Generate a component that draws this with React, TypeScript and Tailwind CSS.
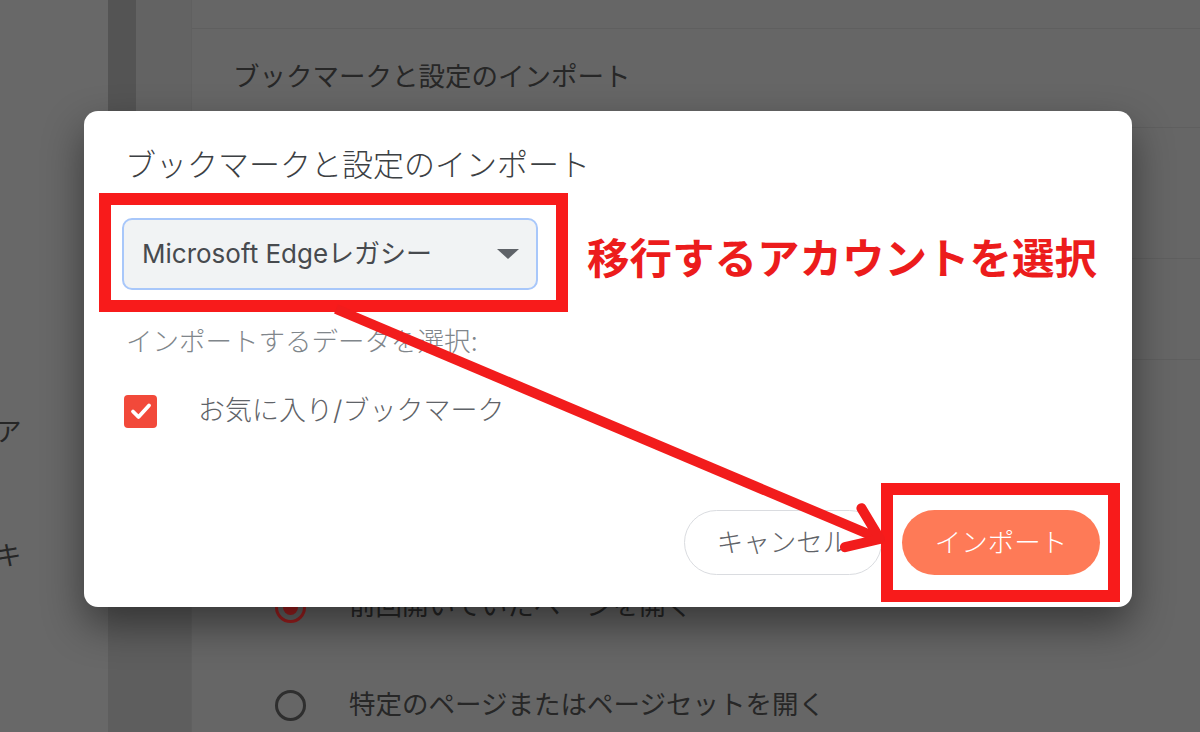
import React from "react";

const jp = "font-['Inter','Noto_Sans_CJK_JP',sans-serif]";

function Radio({ checked }: { checked?: boolean }) {
  return checked ? (
    <span className="flex h-[31px] w-[31px] items-center justify-center rounded-full border-[3px] border-[#a11f1f]">
      <span className="h-[15px] w-[15px] rounded-full bg-[#a11f1f]" />
    </span>
  ) : (
    <span className="h-[31px] w-[31px] rounded-full border-[3px] border-[#2e2e2e]" />
  );
}

function Background() {
  return (
    <div className={`flex h-[732px] w-[1200px] overflow-hidden bg-[#666666] ${jp}`}>
      {/* left nav, cut off by the window edge */}
      <div className="w-[108px] shrink-0 bg-[#686868] pt-[413px] text-[26.5px] leading-[36px] text-[#262626]">
        <div className="-ml-[5px]">ア</div>
        <div className="-ml-[5px] mt-[88px]">キ</div>
      </div>
      <div className="flex w-[84px] shrink-0 flex-col border-r border-[#606060]">
        <div className="flex h-[111px]">
          <div className="w-[28px] bg-[#545454]" />
          <div className="flex-1 bg-[#636363]" />
        </div>
        <div className="flex-1 bg-[#5e5e5e]" />
      </div>
      {/* settings list */}
      <div className="flex flex-1 flex-col text-[26.5px] leading-[36px] text-[#272727]">
        <div className="h-[29px] shrink-0 border-b border-[#5f5f5f]" />
        <div className="flex h-[99px] shrink-0 items-center border-b border-[#5f5f5f] pl-[41px] pb-[4px]">
          ブックマークと設定のインポート
        </div>
        <div className="h-[131px] shrink-0 border-b border-[#5f5f5f]" />
        <div className="h-[101px] shrink-0 border-b border-[#5f5f5f]" />
        <div className="h-[198px] shrink-0" />
        <div className="flex h-[98px] shrink-0 items-center gap-[43px] pl-[83px]">
          <Radio checked />
          <span className="-mt-[5px]">前回開いていたページを開く</span>
        </div>
        <div className="flex h-[98px] shrink-0 items-center gap-[43px] pl-[83px]">
          <Radio />
          <span className="-mt-[3px]">特定のページまたはページセットを開く</span>
        </div>
      </div>
    </div>
  );
}

function ImportDialog() {
  return (
    <div
      className={`absolute left-[84px] top-[111px] flex h-[496px] w-[1048px] flex-col rounded-[14px] bg-white pl-[38px] pr-[32px] pt-[34px] pb-[32px] shadow-[0_18px_40px_rgba(0,0,0,0.45)] ${jp}`}
    >
      <h2 className="ml-[3px] text-[31px] font-light leading-[40px] text-[#3c4043]">
        ブックマークと設定のインポート
      </h2>

      <div className="mt-[33px] flex items-center">
        <div className="relative">
          <div className="flex h-[72px] w-[416px] items-center justify-between rounded-[10px] border-2 border-[#a8c7fa] bg-[#f1f3f4] pl-[18px] pr-[17px]">
            <span className="text-[26px] leading-[34px] text-[#474a4e]">Microsoft Edgeレガシー</span>
            <svg width="22" height="10" viewBox="0 0 22 10">
              <polygon points="0,0 22,0 11,10" fill="#5f6368" />
            </svg>
          </div>
          <div className="absolute -left-[23px] -top-[25px] h-[119px] w-[469px] border-[12px] border-[#f81b1b]" />
        </div>
        <span className="ml-[49px] mt-[10px] text-[42.5px] font-bold leading-[50px] text-[#ec1c1c]">
          移行するアカウントを選択
        </span>
      </div>

      <p className="ml-[4px] mt-[33px] text-[26.5px] font-light leading-[36px] text-[#80868b]">
        インポートするデータを選択:
      </p>

      <label className="mt-[34px] flex items-center gap-[41px]">
        <span className="ml-[2px] flex h-[33px] w-[33px] items-center justify-center rounded-[4px] bg-[#f2493a]">
          <svg width="22" height="18" viewBox="0 0 22 18">
            <path d="M3 9.5 L8.5 15 L19 3.5" fill="none" stroke="white" strokeWidth="3.8" strokeLinecap="round" strokeLinejoin="round" />
          </svg>
        </span>
        <span className="text-[27px] font-light leading-[36px] text-[#5f6368]">お気に入り/ブックマーク</span>
      </label>

      <div className="mt-auto flex justify-end gap-[20px]">
        <button className="h-[65px] w-[198px] rounded-full border border-[#dadce0] bg-white text-[26.5px] font-light text-[#5f6368]">
          キャンセル
        </button>
        <div className="relative">
          <button className="h-[65px] w-[198px] rounded-full bg-[#fe7a57] text-[26.5px] font-light text-white">
            インポート
          </button>
          <div className="absolute -left-[21px] -top-[27px] h-[119px] w-[239px] border-[12px] border-[#f81b1b]" />
        </div>
      </div>
    </div>
  );
}

function Arrow() {
  // annotation arrow from the account picker down to the import button
  const x1 = 336;
  const y1 = 309;
  const x2 = 880;
  const y2 = 539;
  const ang = Math.atan2(y2 - y1, x2 - x1);
  const len = 36;
  const spread = (36 * Math.PI) / 180;
  const a = { x: x2 - len * Math.cos(ang - spread), y: y2 - len * Math.sin(ang - spread) };
  const b = { x: x2 - len * Math.cos(ang + spread), y: y2 - len * Math.sin(ang + spread) };
  return (
    <svg className="pointer-events-none absolute left-0 top-0" width="1200" height="732">
      <line x1={x1} y1={y1} x2={x2} y2={y2} stroke="#f21c1c" strokeWidth="10" />
      <polyline
        points={`${a.x},${a.y} ${x2},${y2} ${b.x},${b.y}`}
        fill="none"
        stroke="#f21c1c"
        strokeWidth="10"
        strokeLinecap="round"
        strokeLinejoin="round"
      />
    </svg>
  );
}

export default function App() {
  return (
    <div className="relative h-[732px] w-[1200px] overflow-hidden">
      <Background />
      <ImportDialog />
      <Arrow />
    </div>
  );
}
